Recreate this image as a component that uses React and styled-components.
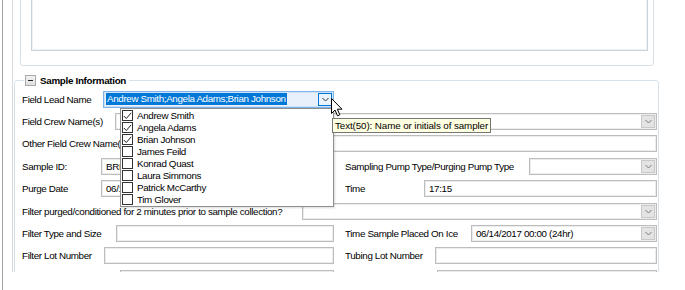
import React from "react";
import styled, { createGlobalStyle } from "styled-components";

const GlobalStyle = createGlobalStyle`
  html, body {
    margin: 0;
    padding: 0;
    background: #fff;
  }
  body {
    font-family: "Liberation Sans", Arial, sans-serif;
    font-size: 9.8px;
    letter-spacing: -0.35px;
    color: #000;
  }
`;

const Page = styled.div`
  width: 685px;
  height: 290px;
  background: #fff;
  display: flex;
  overflow: hidden;
`;

const Frame = styled.div`
  margin-left: 2px;
  border-left: 1px solid #a3a3a3;
  padding-left: 9px;
  flex: 1;
`;

const Viewport = styled.div`
  width: 660px;
  height: 272px;
  overflow: hidden;
  border-left: 1px solid #dadada;
`;

const TopPanel = styled.div`
  box-sizing: border-box;
  margin: -30px 0 0 7px;
  width: 634px;
  height: 96px;
  border: 1px solid #d8e0e8;
  border-radius: 3px;
  padding: 9px 5px 14px 10px;
  display: flex;
`;

const NotesBox = styled.div`
  flex: 1;
  border: 1px solid #c9d3de;
  box-shadow: inset 0 0 0 1px #eef2f6;
  background: #fff;
`;

const Section = styled.fieldset`
  box-sizing: border-box;
  margin: 8px 0 0 1px;
  width: 645px;
  border: 1px solid #d8e0e8;
  border-radius: 3px;
  padding: 1px 1px 0 7px;
  min-width: 0;
`;

const Legend = styled.legend`
  padding: 0 3px 0 1px;
  margin-left: 2px;
  display: flex;
  align-items: center;
  gap: 4px;
  height: 13px;
  font-weight: bold;
  letter-spacing: -0.3px;
`;

const Toggle = styled.span`
  box-sizing: border-box;
  width: 11px;
  height: 11px;
  border: 1px solid #a9a9a9;
  background: linear-gradient(#f4f4f4, #dedede);
  display: flex;
  align-items: center;
  justify-content: center;

  &::after {
    content: "";
    width: 5px;
    height: 1px;
    background: #222;
  }
`;

const Row = styled.div`
  display: grid;
  grid-template-columns: 312px 312px;
  column-gap: 11px;
  height: 22.4px;
  align-items: center;
`;

const Field = styled.div`
  display: flex;
  align-items: center;
  grid-column: ${(p) => (p.wide ? "1 / -1" : "auto")};
  min-width: 0;
`;

const Label = styled.span`
  flex: 0 0 ${(p) => p.w}px;
  white-space: nowrap;
  overflow: hidden;
`;

const Box = styled.div`
  position: relative;
  box-sizing: border-box;
  flex: 1;
  height: 17px;
  border: 1px solid ${(p) => (p.active ? "#7eb4ea" : "#bdbdbd")};
  box-shadow: inset 0 0 0 1px ${(p) => (p.active ? "#cfe3f8" : "#ececec")};
  background: ${(p) => (p.active ? "#e8f1fb" : "#fff")};
  display: flex;
  align-items: center;
  padding-left: 4px;
  white-space: nowrap;
`;

const Selected = styled.span`
  background: #0078d7;
  color: #fff;
  line-height: 12px;
  padding: 0 1px;
  margin-left: -2px;
`;

const ArrowButton = styled.span`
  box-sizing: border-box;
  margin-left: auto;
  margin-right: 1px;
  width: 14px;
  height: 13px;
  border: 1px solid ${(p) => (p.active ? "#0078d7" : "#c9c9c9")};
  background: ${(p) => (p.active ? "#eaf3fc" : "#e3e3e3")};
  display: flex;
  align-items: center;
  justify-content: center;
`;

const Chevron = ({ dark }) => (
  <svg width="7" height="5" viewBox="0 0 7 5">
    <polyline
      points="0.5,1 3.5,4 6.5,1"
      fill="none"
      stroke={dark ? "#333" : "#7a7a7a"}
      strokeWidth="1"
    />
  </svg>
);

const DropList = styled.div`
  position: absolute;
  right: -1px;
  top: calc(100% + 1px);
  width: 214px;
  box-sizing: border-box;
  border: 1px solid #8e8e8e;
  padding-top: 1px;
  background: #fff;
  box-shadow: 1px 1px 2px rgba(0, 0, 0, 0.15);
  z-index: 2;
`;

const Item = styled.div`
  display: flex;
  align-items: center;
  height: 12px;
  padding-left: 1px;
  gap: 4px;
`;

const Check = styled.span`
  box-sizing: border-box;
  width: 11px;
  height: 11px;
  border: 1px solid #333;
  background: #fff;
  display: flex;
  align-items: center;
  justify-content: center;
`;

const Tooltip = styled.div`
  position: absolute;
  left: 228px;
  top: 26px;
  box-sizing: border-box;
  height: 15px;
  padding: 0 2px;
  border: 1px solid #767676;
  background: #ffffe1;
  display: flex;
  align-items: center;
  white-space: nowrap;
  letter-spacing: -0.1px;
  z-index: 3;
`;

const Pointer = styled.svg`
  position: absolute;
  left: 227px;
  top: 6px;
  z-index: 4;
`;

const crew = [
  ["Andrew Smith", true],
  ["Angela Adams", true],
  ["Brian Johnson", true],
  ["James Feild", false],
  ["Konrad Quast", false],
  ["Laura Simmons", false],
  ["Patrick McCarthy", false],
  ["Tim Glover", false],
];

const Input = ({ value }) => <Box>{value}</Box>;

const Combo = ({ value }) => (
  <Box>
    {value}
    <ArrowButton>
      <Chevron />
    </ArrowButton>
  </Box>
);

export default function App() {
  return (
    <Page>
      <GlobalStyle />
      <Frame>
        <Viewport>
          <TopPanel>
            <NotesBox />
          </TopPanel>
          <Section>
            <Legend>
              <Toggle />
              Sample Information
            </Legend>

            <Row>
              <Field>
                <Label w={81}>Field Lead Name</Label>
                <Box active>
                  <Selected>Andrew Smith;Angela Adams;Brian Johnson</Selected>
                  <ArrowButton active>
                    <Chevron dark />
                  </ArrowButton>
                  <DropList>
                    {crew.map(([name, on]) => (
                      <Item key={name}>
                        <Check>
                          {on && (
                            <svg width="9" height="8" viewBox="0 0 9 8">
                              <polyline
                                points="0.8,4 3.3,6.5 8.2,0.8"
                                fill="none"
                                stroke="#222"
                                strokeWidth="1"
                              />
                            </svg>
                          )}
                        </Check>
                        {name}
                      </Item>
                    ))}
                  </DropList>
                  <Tooltip>Text(50): Name or initials of sampler</Tooltip>
                  <Pointer width="12" height="19" viewBox="0 0 12 19">
                    <path
                      d="M0.5 0.5 L0.5 15.5 L4 12 L6.5 17.8 L8.8 16.8 L6.4 11.2 L11 11.2 Z"
                      fill="#fff"
                      stroke="#000"
                      strokeWidth="1"
                      strokeLinejoin="round"
                    />
                  </Pointer>
                </Box>
              </Field>
            </Row>

            <Row>
              <Field wide>
                <Label w={93}>Field Crew Name(s)</Label>
                <Combo />
              </Field>
            </Row>

            <Row>
              <Field wide>
                <Label w={113}>Other Field Crew Name(s)</Label>
                <Input />
              </Field>
            </Row>

            <Row>
              <Field>
                <Label w={79}>Sample ID:</Label>
                <Input value="BRF-0614-01" />
              </Field>
              <Field>
                <Label w={184}>Sampling Pump Type/Purging Pump Type</Label>
                <Combo />
              </Field>
            </Row>

            <Row>
              <Field>
                <Label w={79}>Purge Date</Label>
                <Input value="06/14/2017" />
              </Field>
              <Field>
                <Label w={79}>Time</Label>
                <Input value="17:15" />
              </Field>
            </Row>

            <Row>
              <Field wide>
                <Label w={280}>
                  Filter purged/conditioned for 2 minutes prior to sample collection?
                </Label>
                <Combo />
              </Field>
            </Row>

            <Row>
              <Field>
                <Label w={94}>Filter Type and Size</Label>
                <Input />
              </Field>
              <Field>
                <Label w={126}>Time Sample Placed On Ice</Label>
                <Combo value="06/14/2017 00:00 (24hr)" />
              </Field>
            </Row>

            <Row>
              <Field>
                <Label w={82}>Filter Lot Number</Label>
                <Input />
              </Field>
              <Field>
                <Label w={90}>Tubing Lot Number</Label>
                <Input />
              </Field>
            </Row>

            <Row>
              <Field>
                <Label w={98} />
                <Input />
              </Field>
              <Field>
                <Label w={92} />
                <Input />
              </Field>
            </Row>
          </Section>
        </Viewport>
      </Frame>
    </Page>
  );
}
